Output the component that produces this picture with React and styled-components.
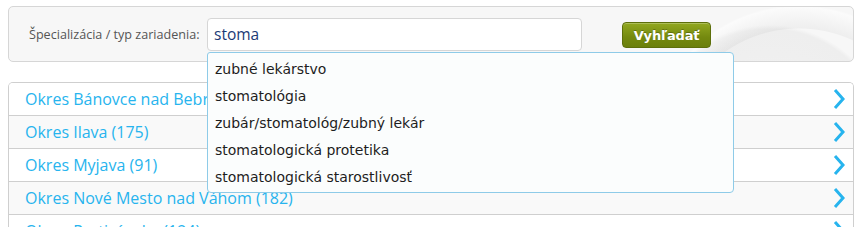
import React from "react";
import styled, { createGlobalStyle } from "styled-components";

const GlobalStyle = createGlobalStyle`
  html, body { margin: 0; padding: 0; background: #fff; }
  body {
    font-family: "Open Sans", "Noto Sans", sans-serif;
    height: 227px;
    overflow: hidden;
  }
`;

const Page = styled.div`
  padding: 6px 10px 0 8px;
  width: 846px;
`;

const SearchPanel = styled.div`
  position: relative;
  height: 54px;
  border: 1px solid #d6d6d6;
  border-radius: 5px;
  background:
    radial-gradient(circle at 790px 150px, transparent 128px, rgba(0,0,0,0.035) 129px, rgba(255,255,255,0.5) 150px, transparent 152px),
    radial-gradient(circle at 760px 140px, #f3f3f3 0, #eeeeee 118px, #f7f7f7 122px, #f7f7f7 100%);
  display: flex;
  align-items: center;
  padding-left: 20px;
`;

const Label = styled.label`
  font-family: "Open Sans", sans-serif;
  font-size: 12.6px;
  color: #555;
  width: 178px;
  white-space: nowrap;
`;

const Field = styled.div`
  position: relative;
  width: 375px;
  height: 33px;
`;

const Input = styled.input`
  box-sizing: border-box;
  width: 100%;
  height: 100%;
  border: 1px solid #d6d6d6;
  border-radius: 4px;
  background: #fff;
  padding: 0 6px;
  font-family: "Open Sans", sans-serif;
  font-size: 15.5px;
  color: #1a3a76;
  outline: none;
`;

const Button = styled.button`
  margin-left: 40px;
  margin-top: 2px;
  width: 89px;
  height: 26px;
  border: 1px solid #5d6f0b;
  border-radius: 4px;
  background: linear-gradient(#92a820, #74890f 60%, #6b800c);
  color: #fff;
  font-family: "DejaVu Sans", Verdana, sans-serif;
  font-weight: bold;
  font-size: 13px;
  letter-spacing: -0.2px;
  text-shadow: 0 -1px 0 rgba(0,0,0,0.25);
  box-shadow: inset 0 1px 0 rgba(255,255,255,0.25);
  padding: 0;
`;

const Suggestions = styled.ul`
  position: absolute;
  left: 0;
  top: 34px;
  z-index: 5;
  box-sizing: border-box;
  width: 527px;
  height: 141px;
  margin: 0;
  padding: 3px 0 0;
  list-style: none;
  background: #fbfdfd;
  border: 1px solid #8ecbe8;
  border-radius: 3px 4px 4px 4px;
`;

const Suggestion = styled.li`
  height: 27px;
  line-height: 27px;
  padding-left: 7px;
  font-family: "DejaVu Sans", Verdana, sans-serif;
  font-size: 14px;
  color: #1e1e1e;
`;

const List = styled.div`
  margin-top: 20px;
  border: 1px solid #cfcfcf;
  border-bottom: none;
  border-radius: 5px 5px 0 0;
  overflow: hidden;
`;

const Row = styled.a`
  display: flex;
  align-items: center;
  justify-content: space-between;
  height: 32px;
  padding: 0 8px 0 16px;
  border-top: 1px solid #cfcfcf;
  background: ${(p) => (p.$alt ? "#f9f9f9" : "#fff")};
  color: #27b4ee;
  font-family: "Open Sans", sans-serif;
  font-size: 16px;
  text-decoration: none;
  &:first-child { border-top: none; }
`;

const Chevron = () => (
  <svg width="12" height="22" viewBox="0 0 12 22">
    <polyline points="2,2 10,11 2,20" fill="none" stroke="#27b4ee" strokeWidth="3" />
  </svg>
);

const suggestions = [
  "zubné lekárstvo",
  "stomatológia",
  "zubár/stomatológ/zubný lekár",
  "stomatologická protetika",
  "stomatologická starostlivosť",
];

const districts = [
  "Okres Bánovce nad Bebravou (88)",
  "Okres Ilava (175)",
  "Okres Myjava (91)",
  "Okres Nové Mesto nad Váhom (182)",
  "Okres Partizánske (124)",
];

export default function App() {
  return (
    <Page>
      <GlobalStyle />
      <SearchPanel>
        <Label>Špecializácia / typ zariadenia:</Label>
        <Field>
          <Input defaultValue="stoma" />
          <Suggestions>
            {suggestions.map((s) => (
              <Suggestion key={s}>{s}</Suggestion>
            ))}
          </Suggestions>
        </Field>
        <Button>Vyhľadať</Button>
      </SearchPanel>
      <List>
        {districts.map((d, i) => (
          <Row key={d} $alt={i % 2 === 1} href="#">
            <span>{d}</span>
            <Chevron />
          </Row>
        ))}
      </List>
    </Page>
  );
}
